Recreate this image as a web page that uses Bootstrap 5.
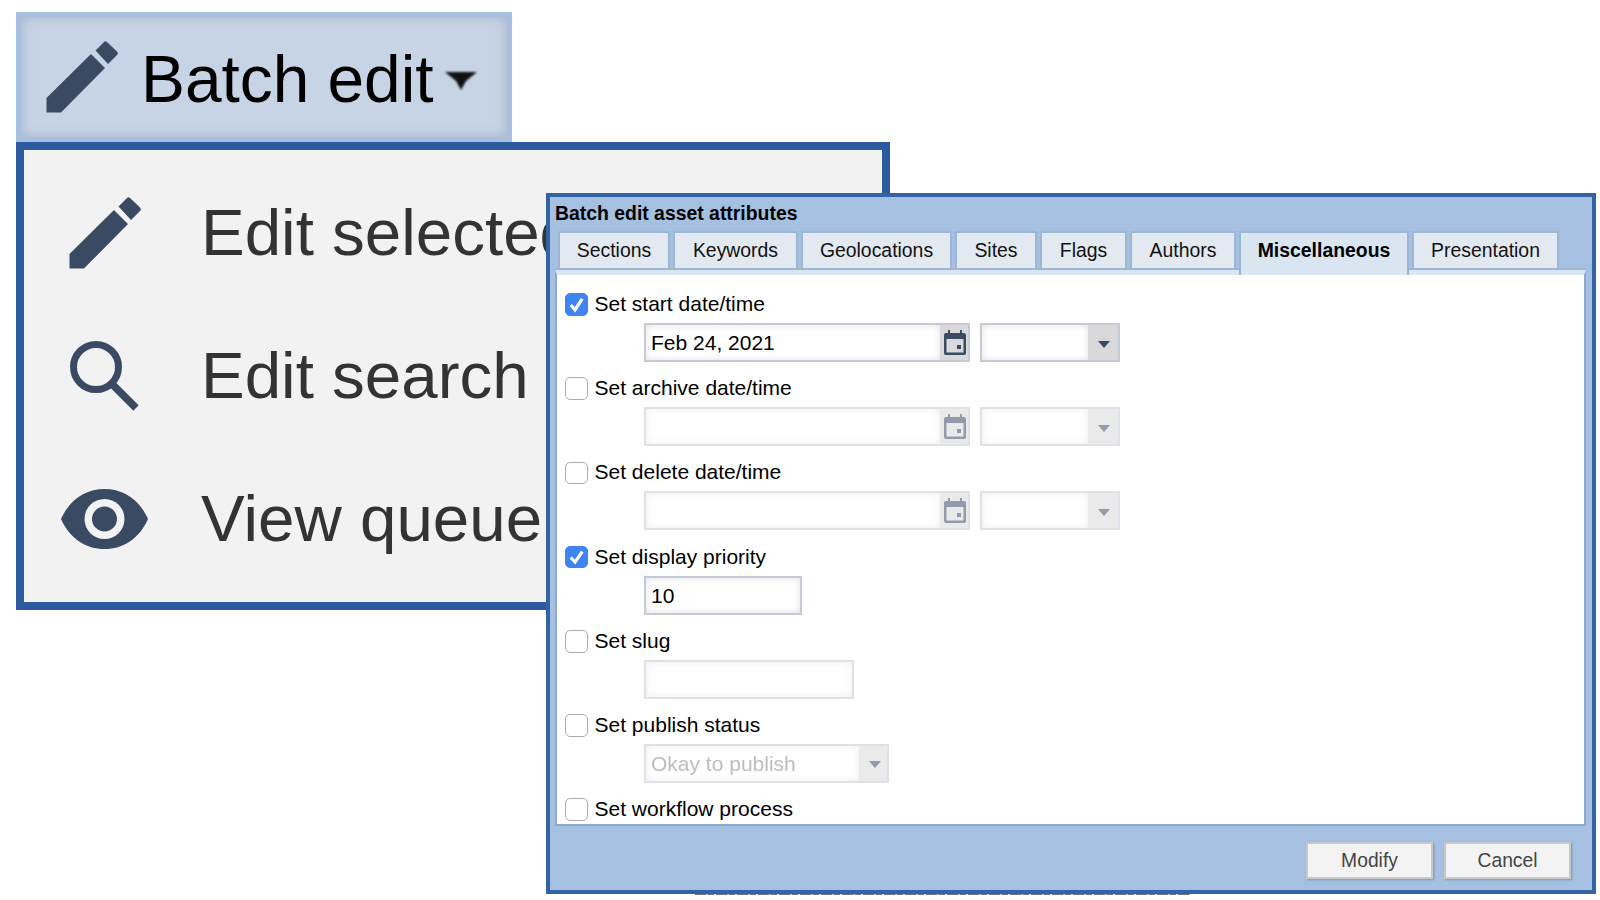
<!DOCTYPE html>
<html lang="en">
<head>
  <meta charset="UTF-8">
  <title>Batch edit</title>
  <link href="https://cdn.jsdelivr.net/npm/bootstrap@5.3.0/dist/css/bootstrap.min.css" rel="stylesheet">
  <style>
    html, body { height: 100%; }
    body {
      background: #fff;
      font-family: "Liberation Sans", Arial, sans-serif;
      overflow: hidden;
    }
    .stage { width: 1600px; height: 900px; padding: 12px 0 0 16px; }

    /* big toolbar button */
    .batch-btn {
      width: 496px; height: 130px;
      background: #c7d4e6;
      border: 5px solid #a9bfdf;
      box-shadow: inset 0 0 12px rgba(120, 135, 160, .45);
      padding-left: 25px;
      color: #000;
      font-size: 65.8px;
    }
    .batch-btn .pen { margin-right: 23px; }
    .batch-btn .batch-txt { position: relative; top: 2px; }
    .batch-btn .drop { margin: 8px 0 0 11px; filter: blur(.8px); }

    /* big menu */
    .big-menu {
      width: 874px; height: 468px;
      background: #f2f2f2;
      border: 8px solid #2b5a9e;
      padding: 11.500px 0 0 36px;
      color: #333;
      font-size: 65.5px;
    }
    .menu-row { height: 143px; white-space: nowrap; }
    .menu-ico { width: 89px; margin-right: 52px; margin-bottom: 10px; }

    /* dialog */
    .dlg {
      position: absolute; left: 546px; top: 193px;
      width: 1050px; height: 701px;
      background: #a6c0e1;
      border: 4px solid #3163a5;
      padding: 0 6px 0 5px;
      color: #000;
      font-size: 21px;
    }
    .dlg-scrap {
      position: absolute; left: 145px; top: 100%; margin-top: 4px;
      width: 495px; height: 1px;
      background: repeating-linear-gradient(90deg, #6f7580 0 11px, #b9bcc2 11px 13px, #6f7580 13px 19px, #d5d7da 19px 21px);
    }
    .dlg-title { font-size: 19.4px; font-weight: 700; height: 34px; line-height: 32px; }
    .dlg-tabs { gap: 3px; padding-left: 3px; height: 44px; border: 0; position: relative; z-index: 1; }
    .dlg-tab {
      height: 39px;
      background: #e3e9f1;
      border: 2px solid #9db6d6;
      color: #111;
      font-size: 19.4px;
      line-height: 35px;
      text-align: center;
    }
    .dlg-tab.is-on { height: 44px; background: #d9e5f1; border-bottom: 0; font-weight: 700; color: #000; }

    .dlg-pane {
      height: 556px;
      margin-top: -5px;
      background: #fff;
      border: 2px solid #8ba9cf;
      border-top: 5px solid #d9e5f1;
      box-shadow: 0 -2px 0 #9db6d6;
      padding: 17px 0 0 8px;
      overflow: hidden;
    }
    .set-row { height: 84.2px; }
    .set-check { height: 23px; line-height: 23px; gap: 7px; }
    .set-check .form-check-input {
      width: 22.5px; height: 22.5px; margin: 2px 0 0;
      border: 1px solid #acacac; border-radius: 5px;
      flex: none;
    }
    .set-check .form-check-input:checked {
      background-color: #3f84f3;
      border-color: #3f84f3;
      background-size: 100% 100%;
      background-image: url("data:image/svg+xml,%3csvg xmlns='http://www.w3.org/2000/svg' viewBox='0 0 22 22'%3e%3cpath fill='none' stroke='%23fff' stroke-width='3.4' d='M5 11.500l4.500 5L17 5'/%3e%3c/svg%3e");
    }
    .set-fields { margin: 8px 0 0 79px; gap: 9.5px; }
    .fld {
      height: 39px;
      border: 2px solid #c6cad6;
      box-shadow: inset 0 0 7px rgba(0, 0, 0, .12);
      padding: 0 5px;
      line-height: 35px;
      background: #fff;
    }
    .fld-wrap { height: 39px; background: #d9d9d9; border: 2px solid #c6cad6; }
    .fld-wrap .fld { height: 35px; border: 0; line-height: 35px; }
    .fld-add { display: flex; align-items: center; justify-content: center; padding-left: 2px; }
    .fld-add .arrow { margin: 3px 0 0 1px; }
    .is-off { opacity: .55; }
    .is-off .fld { color: #888; }

    .w-date { width: 326px; }
    .w-time { width: 140px; }
    .w-prio { width: 158px; }
    .w-slug { width: 210px; }
    .w-stat { width: 245px; }

    .dlg-foot { gap: 11px; padding: 15.500px 15px 0 0; }
    .foot-btn {
      width: 127px; height: 37px;
      background: #f3f3f3;
      border: 2px solid #c8c8c8;
      border-radius: 0;
      box-shadow: 1px 1px 2px rgba(60, 80, 110, .4);
      color: #444;
      font-size: 19.3px;
      line-height: 33px;
      padding: 0;
    }
  </style>
</head>
<body>

  <div class="stage">
    <div class="batch-btn d-flex align-items-center">
      <svg class="pen" width="72" height="72" viewBox="0 0 72 72"><path fill="#3a4a63" d="M.5 71.5V57L45 13l14 14-44 44.500zM49.500 9.500 58 1a2 2 0 0 1 3 0l10 9.500a2.500 2.500 0 0 1 0 3.500l-9 9z"/></svg>
      <span class="batch-txt">Batch edit</span>
      <svg class="drop" width="32" height="20" viewBox="0 0 32 20"><path fill="#111" d="M0 1h32L21 10l-5 9-5-9z"/></svg>
    </div>

    <div class="big-menu">
      <div class="menu-row d-flex align-items-center">
        <div class="menu-ico text-center"><svg width="72" height="72" viewBox="0 0 72 72"><path fill="#3a4a63" d="M.5 71.5V57L45 13l14 14-44 44.500zM49.500 9.500 58 1a2 2 0 0 1 3 0l10 9.500a2.500 2.500 0 0 1 0 3.500l-9 9z"/></svg></div>
        <span>Edit selected</span>
      </div>
      <div class="menu-row d-flex align-items-center">
        <div class="menu-ico text-center"><svg width="70" height="70" viewBox="0 0 70 70"><circle cx="26" cy="26" r="22.500" fill="none" stroke="#3a4a63" stroke-width="7"/><path d="M43 44 66 67" stroke="#3a4a63" stroke-width="7.500" fill="none"/></svg></div>
        <span>Edit search</span>
      </div>
      <div class="menu-row d-flex align-items-center">
        <div class="menu-ico text-center"><svg width="87" height="60" viewBox="0 0 87 60"><path fill="#3a4a63" d="M0 30C9 10 25 0 43.500 0S78 10 87 30C78 50 62 60 43.500 60S9 50 0 30z"/><circle cx="43.500" cy="30" r="20" fill="#f2f2f2"/><circle cx="43.500" cy="30" r="12.500" fill="#3a4a63"/></svg></div>
        <span>View queue</span>
      </div>
    </div>
  </div>

  <div class="dlg">
    <div class="dlg-scrap"></div>
    <div class="dlg-title">Batch edit asset attributes</div>
    <div class="dlg-tabs nav">
      <div class="dlg-tab" style="width:112px">Sections</div>
      <div class="dlg-tab" style="width:125px">Keywords</div>
      <div class="dlg-tab" style="width:151px">Geolocations</div>
      <div class="dlg-tab" style="width:82px">Sites</div>
      <div class="dlg-tab" style="width:87px">Flags</div>
      <div class="dlg-tab" style="width:106px">Authors</div>
      <div class="dlg-tab is-on" style="width:170px">Miscellaneous</div>
      <div class="dlg-tab" style="width:147px">Presentation</div>
    </div>

    <div class="dlg-pane">
      <div class="set-row">
        <div class="set-check d-flex align-items-center"><input class="form-check-input" type="checkbox" checked><span>Set start date/time</span></div>
        <div class="set-fields d-flex">
          <div class="fld-wrap w-date d-flex"><div class="fld flex-grow-1">Feb 24, 2021</div><div class="fld-add" style="width:28px"><svg width="22" height="25" viewBox="0 0 22 25"><path fill="#3a4a63" d="M4 0h2v3h10V0h2v3h2a2 2 0 0 1 2 2v18a2 2 0 0 1-2 2H2a2 2 0 0 1-2-2V5a2 2 0 0 1 2-2h2zM2.500 9v13.500h17V9zM13 15h4v4h-4z"/></svg></div></div>
          <div class="fld-wrap w-time d-flex"><div class="fld flex-grow-1"></div><div class="fld-add" style="width:30px"><svg class="arrow" width="12" height="7" viewBox="0 0 12 7"><path fill="#3a4a63" d="M0 0h12L6 7z"/></svg></div></div>
        </div>
      </div>
      <div class="set-row">
        <div class="set-check d-flex align-items-center"><input class="form-check-input" type="checkbox"><span>Set archive date/time</span></div>
        <div class="set-fields d-flex is-off">
          <div class="fld-wrap w-date d-flex"><div class="fld flex-grow-1"></div><div class="fld-add" style="width:28px"><svg width="22" height="25" viewBox="0 0 22 25"><path fill="#3a4a63" d="M4 0h2v3h10V0h2v3h2a2 2 0 0 1 2 2v18a2 2 0 0 1-2 2H2a2 2 0 0 1-2-2V5a2 2 0 0 1 2-2h2zM2.500 9v13.500h17V9zM13 15h4v4h-4z"/></svg></div></div>
          <div class="fld-wrap w-time d-flex"><div class="fld flex-grow-1"></div><div class="fld-add" style="width:30px"><svg class="arrow" width="12" height="7" viewBox="0 0 12 7"><path fill="#3a4a63" d="M0 0h12L6 7z"/></svg></div></div>
        </div>
      </div>
      <div class="set-row">
        <div class="set-check d-flex align-items-center"><input class="form-check-input" type="checkbox"><span>Set delete date/time</span></div>
        <div class="set-fields d-flex is-off">
          <div class="fld-wrap w-date d-flex"><div class="fld flex-grow-1"></div><div class="fld-add" style="width:28px"><svg width="22" height="25" viewBox="0 0 22 25"><path fill="#3a4a63" d="M4 0h2v3h10V0h2v3h2a2 2 0 0 1 2 2v18a2 2 0 0 1-2 2H2a2 2 0 0 1-2-2V5a2 2 0 0 1 2-2h2zM2.500 9v13.500h17V9zM13 15h4v4h-4z"/></svg></div></div>
          <div class="fld-wrap w-time d-flex"><div class="fld flex-grow-1"></div><div class="fld-add" style="width:30px"><svg class="arrow" width="12" height="7" viewBox="0 0 12 7"><path fill="#3a4a63" d="M0 0h12L6 7z"/></svg></div></div>
        </div>
      </div>
      <div class="set-row">
        <div class="set-check d-flex align-items-center"><input class="form-check-input" type="checkbox" checked><span>Set display priority</span></div>
        <div class="set-fields d-flex"><div class="fld w-prio">10</div></div>
      </div>
      <div class="set-row">
        <div class="set-check d-flex align-items-center"><input class="form-check-input" type="checkbox"><span>Set slug</span></div>
        <div class="set-fields d-flex is-off"><div class="fld w-slug"></div></div>
      </div>
      <div class="set-row">
        <div class="set-check d-flex align-items-center"><input class="form-check-input" type="checkbox"><span>Set publish status</span></div>
        <div class="set-fields d-flex is-off">
          <div class="fld-wrap w-stat d-flex"><div class="fld flex-grow-1">Okay to publish</div><div class="fld-add" style="width:28px"><svg class="arrow" width="12" height="7" viewBox="0 0 12 7"><path fill="#3a4a63" d="M0 0h12L6 7z"/></svg></div></div>
        </div>
      </div>
      <div class="set-row">
        <div class="set-check d-flex align-items-center"><input class="form-check-input" type="checkbox"><span>Set workflow process</span></div>
      </div>
    </div>

    <div class="dlg-foot d-flex justify-content-end">
      <button class="foot-btn btn" type="button">Modify</button>
      <button class="foot-btn btn" type="button">Cancel</button>
    </div>
  </div>

  <script src="https://cdn.jsdelivr.net/npm/bootstrap@5.3.0/dist/js/bootstrap.bundle.min.js"></script>
</body>
</html>
